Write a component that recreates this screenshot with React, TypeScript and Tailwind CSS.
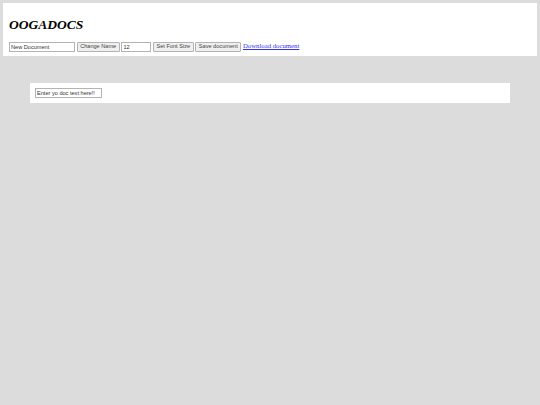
export default function App() {
  return (
    <div className="min-h-screen bg-[#dcdcdc] p-[3px] font-['Liberation_Sans',Arial,sans-serif]">
      <header className="bg-white px-[6px] pt-[14px] pb-[4px]">
        <h1 className="mb-[9.5px] font-['Liberation_Serif','Times_New_Roman',serif] text-[13.5px] leading-[15px] font-bold italic text-black">
          OOGADOCS
        </h1>
        <div className="flex h-[10px] items-center gap-[1.7px]">
          <input
            defaultValue="New Document"
            className="h-[10px] w-[66px] border border-[#b3b3b3] bg-white px-[1px] text-[5.6px] leading-none text-[#333] outline-none"
          />
          <button className="h-[10px] w-[43px] rounded-[1px] border border-[#b3b3b3] bg-[#efefef] text-[5.6px] leading-none text-[#444]">
            Change Name
          </button>
          <input
            defaultValue="12"
            className="h-[10px] w-[30px] border border-[#b3b3b3] bg-white px-[1px] text-[5.6px] leading-none text-[#333] outline-none"
          />
          <button className="h-[10px] w-[40.5px] rounded-[1px] border border-[#b3b3b3] bg-[#efefef] text-[5.6px] leading-none text-[#444]">
            Set Font Size
          </button>
          <button className="h-[10px] w-[46px] rounded-[1px] border border-[#b3b3b3] bg-[#efefef] text-[5.6px] leading-none text-[#444]">
            Save document
          </button>
          <a
            href="#"
            className="font-['Liberation_Serif','Times_New_Roman',serif] text-[6.75px] leading-none text-[#3333ee] underline"
          >
            Download document
          </a>
        </div>
      </header>
      <main className="mx-[27px] mt-[27px] h-[20px] bg-white px-[5px] py-[5.5px]">
        <input
          defaultValue="Enter yo doc text here!!"
          className="block h-[9.5px] w-[67px] border border-[#b3b3b3] bg-white px-[1px] text-[5.6px] leading-none text-[#333] outline-none"
        />
      </main>
    </div>
  )
}
